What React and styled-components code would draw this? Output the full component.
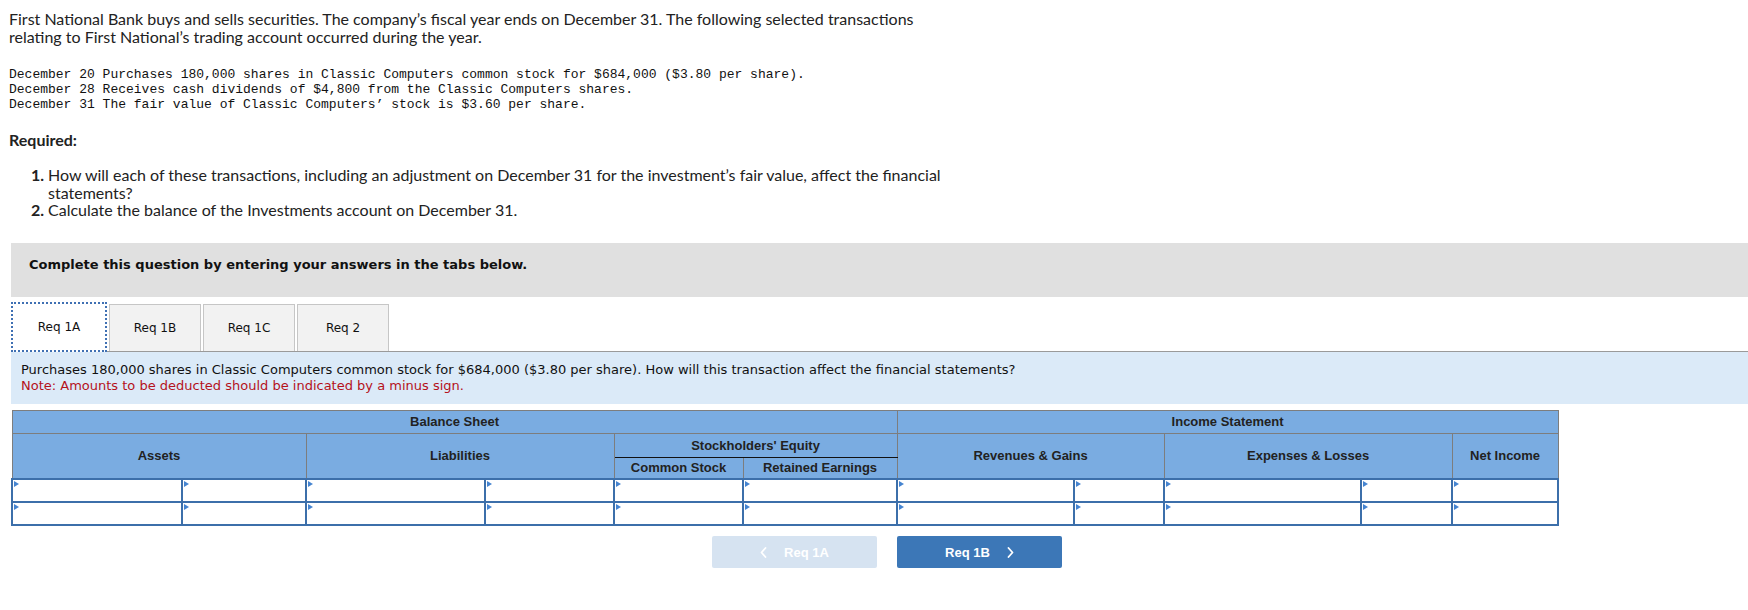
import React from 'react';
import styled, { createGlobalStyle } from 'styled-components';

const GlobalStyle = createGlobalStyle`
    body {
        margin: 0;
        background: #ffffff;
    }
`;

const Page = styled.div`
    width: 1748px;
    padding-top: 10px;
`;

const Intro = styled.p`
    margin: 0 0 0 9px;
    width: 950px;
    font-family: Lato, "Open Sans", sans-serif;
    font-size: 16px;
    line-height: 18px;
    color: #222;
`;

const Transactions = styled.pre`
    margin: 21px 0 0 9px;
    font-family: "Liberation Mono", "Courier New", monospace;
    font-size: 13px;
    line-height: 15px;
    color: #111;
`;

const Required = styled.h3`
    margin: 19px 0 0 9px;
    font-family: Lato, "Open Sans", sans-serif;
    font-size: 16px;
    font-weight: 700;
    line-height: 18px;
    color: #222;
`;

const Steps = styled.ol`
    list-style: none;
    margin: 17px 0 0 0;
    padding: 0 0 0 26px;
    width: 940px;
    font-family: Lato, "Open Sans", sans-serif;
    font-size: 16px;
    line-height: 17.5px;
    color: #222;
`;

const Step = styled.li`
    display: grid;
    grid-template-columns: 18px 1fr;
    column-gap: 4px;
`;

const StepNumber = styled.b`
    text-align: right;
`;

const Banner = styled.div`
    margin: 24px 0 0 11px;
    height: 54px;
    box-sizing: border-box;
    padding: 14px 18px 0;
    background: #e0e0e0;
    font-family: "DejaVu Sans", Verdana, sans-serif;
    font-size: 13px;
    font-weight: 700;
    line-height: 16px;
    color: #111;
`;

const TabStrip = styled.div`
    display: flex;
    align-items: flex-end;
    gap: 2px;
    margin: 5px 0 0 11px;
    height: 49px;
    border-bottom: 1px solid #9a9a9a;
`;

const Tab = styled.div`
    display: flex;
    align-items: center;
    justify-content: center;
    box-sizing: border-box;
    width: ${p => (p.$active ? '96px' : '92px')};
    height: ${p => (p.$active ? '50px' : '47px')};
    margin-bottom: ${p => (p.$active ? '-1px' : '0')};
    background: ${p => (p.$active ? '#ffffff' : '#f2f2f2')};
    border: ${p => (p.$active ? '2px dotted #3f70b3' : '1px solid #c6c6c6')};
    border-bottom: ${p => (p.$active ? '2px dotted #3f70b3' : 'none')};
    font-family: "DejaVu Sans", Verdana, sans-serif;
    font-size: 12px;
    color: #111;
    position: relative;
`;

const Prompt = styled.div`
    margin-left: 11px;
    padding: 10px 10px;
    background: #dbeaf8;
    font-family: "DejaVu Sans", Verdana, sans-serif;
    font-size: 13px;
    line-height: 16px;
    color: #111;
`;

const Note = styled.div`
    color: #b5121b;
`;

const Sheet = styled.table`
    margin: 6px 0 0 11px;
    width: 1546px;
    table-layout: fixed;
    border-collapse: collapse;
    font-family: "Liberation Sans", Arial, sans-serif;
    font-size: 13px;
    font-weight: 700;
    color: #222;
`;

const Head = styled.th`
    background: #7aace1;
    border: 1px solid #7d7d7d;
    border-bottom: ${p => (p.$split ? '1px solid #111' : '1px solid #7d7d7d')};
    height: ${p => p.$h}px;
    padding: 0;
    text-align: center;
    vertical-align: middle;
    box-sizing: border-box;
`;

const Entry = styled.td`
    position: relative;
    height: 23px;
    padding: 0;
    box-sizing: border-box;
    background: #ffffff;
    border: 2px solid #3c6faa;

    &::before {
        content: '';
        position: absolute;
        top: 1px;
        left: 1px;
        border-top: 3.5px solid transparent;
        border-bottom: 3.5px solid transparent;
        border-left: 5px solid #4584d0;
    }
`;

const NavBar = styled.div`
    display: flex;
    justify-content: center;
    gap: 20px;
    margin-top: 10px;
    padding-left: 26px;
`;

const NavButton = styled.button`
    display: flex;
    align-items: center;
    justify-content: center;
    gap: 17px;
    width: 165px;
    height: 32px;
    border: none;
    border-radius: 2px;
    background: ${p => (p.disabled ? '#d6e3f1' : '#3c77b7')};
    font-family: "Liberation Sans", Arial, sans-serif;
    font-size: 13px;
    font-weight: 700;
    color: #ffffff;
    padding: 0;
`;

const columns = [170, 124, 179, 129, 129, 154, 177, 90, 197, 91, 106];

const Chevron = ({ left }) => (
    <svg width="7" height="11" viewBox="0 0 7 11" fill="none">
        <path
            d={left ? 'M5.5 1L1.5 5.5L5.5 10' : 'M1.5 1L5.5 5.5L1.5 10'}
            stroke="#ffffff"
            strokeWidth="1.8"
            strokeLinecap="round"
            strokeLinejoin="round"
        />
    </svg>
);

export default function App() {
    return (
        <Page>
            <GlobalStyle />
            <Intro>
                First National Bank buys and sells securities. The company’s fiscal year ends on December 31. The following selected transactions relating to First National’s trading account occurred during the year.
            </Intro>
            <Transactions>{`December 20 Purchases 180,000 shares in Classic Computers common stock for $684,000 ($3.80 per share).
December 28 Receives cash dividends of $4,800 from the Classic Computers shares.
December 31 The fair value of Classic Computers’ stock is $3.60 per share.`}</Transactions>
            <Required>Required:</Required>
            <Steps>
                <Step>
                    <StepNumber>1.</StepNumber>
                    <span>How will each of these transactions, including an adjustment on December 31 for the investment’s fair value, affect the financial statements?</span>
                </Step>
                <Step>
                    <StepNumber>2.</StepNumber>
                    <span>Calculate the balance of the Investments account on December 31.</span>
                </Step>
            </Steps>

            <Banner>Complete this question by entering your answers in the tabs below.</Banner>

            <TabStrip>
                <Tab $active>Req 1A</Tab>
                <Tab>Req 1B</Tab>
                <Tab>Req 1C</Tab>
                <Tab>Req 2</Tab>
            </TabStrip>

            <Prompt>
                <div>Purchases 180,000 shares in Classic Computers common stock for $684,000 ($3.80 per share). How will this transaction affect the financial statements?</div>
                <Note>Note: Amounts to be deducted should be indicated by a minus sign.</Note>
            </Prompt>

            <Sheet>
                <colgroup>
                    {columns.map((w, i) => <col key={i} style={{ width: w }} />)}
                </colgroup>
                <thead>
                    <tr>
                        <Head colSpan={6} $h={23}>Balance Sheet</Head>
                        <Head colSpan={5} $h={23}>Income Statement</Head>
                    </tr>
                    <tr>
                        <Head colSpan={2} rowSpan={2}>Assets</Head>
                        <Head colSpan={2} rowSpan={2}>Liabilities</Head>
                        <Head colSpan={2} $h={24} $split>Stockholders' Equity</Head>
                        <Head colSpan={2} rowSpan={2}>Revenues &amp; Gains</Head>
                        <Head colSpan={2} rowSpan={2}>Expenses &amp; Losses</Head>
                        <Head rowSpan={2}>Net Income</Head>
                    </tr>
                    <tr>
                        <Head $h={22}>Common Stock</Head>
                        <Head $h={22}>Retained Earnings</Head>
                    </tr>
                </thead>
                <tbody>
                    {[0, 1].map(r => (
                        <tr key={r}>
                            {columns.map((w, i) => <Entry key={i} />)}
                        </tr>
                    ))}
                </tbody>
            </Sheet>

            <NavBar>
                <NavButton disabled>
                    <Chevron left />
                    <span>Req 1A</span>
                </NavButton>
                <NavButton>
                    <span>Req 1B</span>
                    <Chevron />
                </NavButton>
            </NavBar>
        </Page>
    );
}
